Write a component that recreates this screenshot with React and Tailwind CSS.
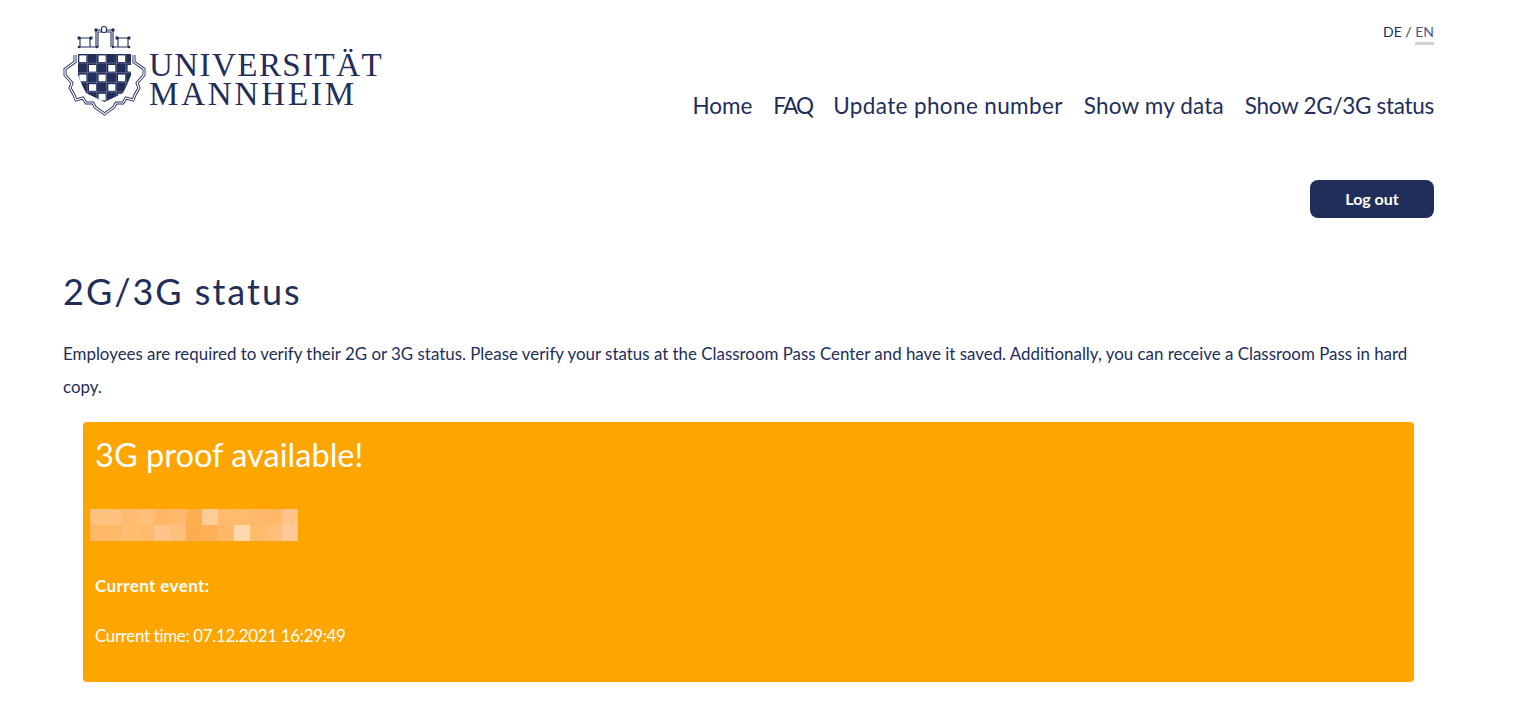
import React from "react";

const navItems = [
  { label: "Home", className: "" },
  { label: "FAQ", className: "tracking-[-1.8px]" },
  { label: "Update phone number", className: "tracking-[0.37px]" },
  { label: "Show my data", className: "tracking-[0.17px]" },
  { label: "Show 2G/3G status", className: "tracking-[-0.3px]" },
];

// pixelated (blurred out) name in the status card
const mosaic = [
  "bg-[#ffc27f]", "bg-[#ffc27f]", "bg-[#ffbc70]", "bg-[#ffbf78]", "bg-[#ffb766]", "bg-[#ffb96c]", "bg-[#ffaf50]",
  "bg-[#ffcb99]", "bg-[#ffba6c]", "bg-[#ffba6c]", "bg-[#ffb86a]", "bg-[#ffb86a]", "bg-[#ffc588]",
  "bg-[#ffb966]", "bg-[#ffb966]", "bg-[#ffbd72]", "bg-[#ffba6c]", "bg-[#ffc48c]", "bg-[#ffbf7c]", "bg-[#ffac50]",
  "bg-[#ffb058]", "bg-[#ffb966]", "bg-[#ffd8b0]", "bg-[#ffba6c]", "bg-[#ffbf78]", "bg-[#ffc898]",
];

const NAVY = "#222e5a";
const cols = [18, 27.7, 37.3, 47, 56.7, 66.3];
const rows = [29, 38.6, 48.2, 57.8, 67.4];
const gear =
  "M15 30L15 37L5 44L5 50L12 58L10 63L14 70L16 75L23 73L26 78L33 78L35 82L44.5 89L54 82L56 78L63 78L66 73L73 75L75 70L79 63L77 58L84 50L84 44L74 37L74 30";
const shield = "M18 29H71V50L67 60L63 68L55 72L44.5 77L34 72L26 68L22 60L18 50Z";

function Crest() {
  return (
    <svg width="90" height="92" viewBox="0 0 90 92" fill="none" className="shrink-0">
      <defs>
        <clipPath id="shield-clip">
          <path d={shield} />
        </clipPath>
      </defs>

      {/* towers on top */}
      <g stroke={NAVY} strokeWidth="1.1">
        <path d="M36 22V5H53V22M38 22V7H51V22" />
        <path d="M18 22H37M53 22H70M19 13H31M57 13H69M20 13V22M30 13V22M58 13V22M68 13V22" />
        <rect x="41.5" y="1.5" width="5" height="6" rx="2.2" fill="#fff" />
      </g>
      <g fill={NAVY}>
        <circle cx="19" cy="13" r="1.7" />
        <circle cx="31" cy="13" r="1.7" />
        <circle cx="57" cy="13" r="1.7" />
        <circle cx="69" cy="13" r="1.7" />
        <circle cx="36" cy="5" r="1.7" />
        <circle cx="53" cy="5" r="1.7" />
        <circle cx="19" cy="22" r="1.3" />
        <circle cx="37" cy="22" r="1.3" />
        <circle cx="53" cy="22" r="1.3" />
        <circle cx="69" cy="22" r="1.3" />
      </g>

      {/* checkered shield */}
      <g clipPath="url(#shield-clip)">
        <rect x="18" y="29" width="53" height="48" fill={NAVY} />
        {rows.map((y, r) =>
          cols.map((x, c) =>
            (r + c) % 2 === 0 ? <rect key={`${r}-${c}`} x={x + 1.3} y={y + 1.4} width="7" height="6.6" fill="#fff" /> : null
          )
        )}
        <path d="M27.2 29V77M36.8 29V77M46.5 29V77M56.2 29V77M65.8 29V77M18 38.1H71M18 47.7H71M18 57.3H71M18 66.9H71" stroke="#8f97b3" strokeWidth="0.5" />
      </g>

      {/* cog wheel outline, double line */}
      <path d={gear} stroke={NAVY} strokeWidth="3" strokeLinejoin="miter" />
      <path d={gear} stroke="#fff" strokeWidth="1.2" strokeLinejoin="miter" />
    </svg>
  );
}

export default function App() {
  return (
    <div className="min-h-screen bg-white px-[63px] pr-[101px] text-[#222e5a] font-['Lato','Carlito',sans-serif]">
      {/* Header */}
      <header className="flex items-start justify-between pt-[22px]">
        <div className="-ml-[3px] flex items-start pt-[3px]">
          <Crest />
          <div className="-ml-[1px] mt-[26px] font-['Liberation_Serif',serif] text-[33px] leading-[29px]">
            <div className="tracking-[1.45px]">UNIVERSITÄT</div>
            <div className="tracking-[2.85px]">MANNHEIM</div>
          </div>
        </div>
        <div className="flex flex-col items-end">
          <div className="text-[14px] leading-[20px]">
            DE / <span className="inline-block border-b-[3px] border-[#ccd3dc] text-[#4a5785]">EN</span>
          </div>
          <nav className="mt-[46px] flex gap-[21px] text-[22.5px] leading-[30px]">
            {navItems.map((item) => (
              <a key={item.label} href="#" className={item.className}>
                {item.label}
              </a>
            ))}
          </nav>
        </div>
      </header>

      {/* Log out */}
      <div className="mt-[59px] flex justify-end">
        <button className="h-[38px] w-[124px] rounded-lg bg-[#222e5a] text-[16px] font-bold text-white">Log out</button>
      </div>

      <h1 className="mt-[50px] text-[36px] leading-[46px] tracking-[2px]">2G/3G status</h1>

      <p className="mt-[23px] text-[16.9px] leading-[33px]">
        Employees are required to verify their 2G or 3G status. Please verify your status at the Classroom Pass Center
        and have it saved. Additionally, you can receive a Classroom Pass in hard copy.
      </p>

      {/* Status card */}
      <div className="mx-[20px] mt-[19px] h-[260px] rounded bg-[#ffa500] px-[12px] pt-[13px] text-white">
        <h2 className="text-[32.6px] leading-[40px]">3G proof available!</h2>
        <div className="-ml-[5px] mt-[34px] grid w-[208px] grid-cols-13">
          {mosaic.map((color, i) => (
            <div key={i} className={`h-4 ${color}`} />
          ))}
        </div>
        <p className="mt-[34px] text-[17px] font-bold leading-[22px] tracking-[0.4px]">Current event:</p>
        <p className="mt-[28px] text-[17px] leading-[22px] tracking-[-0.35px]">Current time: 07.12.2021 16:29:49</p>
      </div>
    </div>
  );
}
